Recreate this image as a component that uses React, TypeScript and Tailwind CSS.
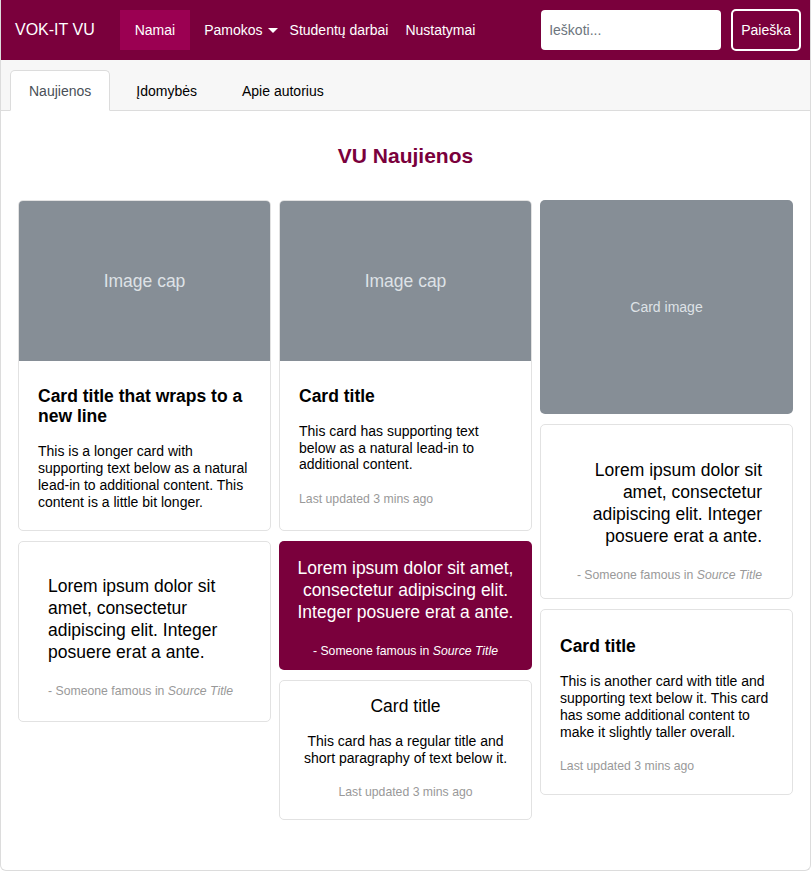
import { useState } from "react";

const font = { fontFamily: '"Liberation Sans", Arial, sans-serif' };

function ImageCap({ label }: { label: string }) {
  return (
    <div className="flex h-[160px] items-center justify-center rounded-t-[4px] bg-[#868e96] text-[17.5px] text-[#dee2e6]">
      {label}
    </div>
  );
}

function Quote({ align, className }: { align: "left" | "right"; className?: string }) {
  return (
    <div className={`rounded-[5px] border border-[#e2e2e2] bg-white ${className ?? ""}`}>
      <p className={`text-[17.5px] leading-[22px] text-black ${align === "right" ? "text-right" : ""}`}>
        Lorem ipsum dolor sit amet, consectetur adipiscing elit. Integer posuere erat a ante.
      </p>
      <p className={`mt-[21px] text-[12.25px] leading-[14px] text-[#999] ${align === "right" ? "text-right" : ""}`}>
        - Someone famous in <i>Source Title</i>
      </p>
    </div>
  );
}

export default function App() {
  const [tab, setTab] = useState("Naujienos");
  const tabs = ["Naujienos", "Įdomybės", "Apie autorius"];

  return (
    <div style={font} className="min-h-screen rounded-b-[6px] border border-t-0 border-[#dcdcdc] bg-white">
      {/* Navbar */}
      <nav className="flex h-[60px] items-center bg-[#7a003c] pl-[14px] pr-[9px] text-white">
        <span className="text-[16px]">VOK-IT VU</span>
        <div className="ml-[25px] flex items-center text-[14px]">
          <a className="flex h-[40px] items-center bg-[#9b0052] px-[15px]">Namai</a>
          <a className="ml-[14px] flex items-center gap-[5px]">
            Pamokos
            <span className="mt-[1px] inline-block border-x-[5px] border-t-[5px] border-x-transparent border-t-white" />
          </a>
          <a className="ml-[12px]">Studentų darbai</a>
          <a className="ml-[17px]">Nustatymai</a>
        </div>
        <div className="ml-auto flex items-center gap-[10px]">
          <input
            placeholder="Ieškoti..."
            className="h-[40px] w-[180px] rounded-[4px] bg-white px-[8px] text-[14px] text-black outline-none placeholder:text-[#6c757d]"
          />
          <button className="h-[42px] rounded-[5px] border-2 border-white px-[8px] text-[14px] text-white">
            Paieška
          </button>
        </div>
      </nav>

      {/* Tabs */}
      <div className="flex h-[51px] items-end gap-[7px] border-b border-[#dcdcdc] bg-[#f7f7f7] pl-[9px] text-[14px]">
        {tabs.map((t) => (
          <button
            key={t}
            onClick={() => setTab(t)}
            className={`-mb-px flex h-[41px] items-center rounded-t-[5px] border px-[18px] pt-[2px] ${
              tab === t ? "border-[#dcdcdc] border-b-white bg-white text-[#495057]" : "border-transparent text-black"
            }`}
          >
            {t}
          </button>
        ))}
      </div>

      <h1 className="mt-[33px] text-center text-[21px] font-bold leading-[24px] text-[#7a003c]">VU Naujienos</h1>

      {/* Card columns */}
      <div className="mt-[32px] flex gap-[8px] px-[17px]">
        {/* Column 1 */}
        <div className="flex flex-1 flex-col gap-[10px]">
          <div className="rounded-[5px] border border-[#e2e2e2] bg-white">
            <ImageCap label="Image cap" />
            <div className="px-[19px] pb-[19px] pt-[25px]">
              <h5 className="text-[17.5px] font-bold leading-[20px] text-black">Card title that wraps to a new line</h5>
              <p className="mt-[17px] text-[14px] leading-[17px] text-black">
                This is a longer card with supporting text below as a natural lead-in to additional content. This
                content is a little bit longer.
              </p>
            </div>
          </div>
          <Quote align="left" className="px-[29px] pb-[23px] pt-[33px]" />
        </div>

        {/* Column 2 */}
        <div className="flex flex-1 flex-col gap-[10px]">
          <div className="rounded-[5px] border border-[#e2e2e2] bg-white">
            <ImageCap label="Image cap" />
            <div className="px-[19px] pb-[24px] pt-[25px]">
              <h5 className="text-[17.5px] font-bold leading-[20px] text-black">Card title</h5>
              <p className="mt-[17px] text-[14px] leading-[16.5px] text-black">
                This card has supporting text below as a natural lead-in to additional content.
              </p>
              <p className="mt-[19px] text-[12.25px] leading-[14px] text-[#999]">Last updated 3 mins ago</p>
            </div>
          </div>
          <div className="rounded-[5px] bg-[#7a003c] px-[12px] pb-[12px] pt-[16px] text-center text-white">
            <p className="text-[17.5px] leading-[22px]">
              Lorem ipsum dolor sit amet, consectetur adipiscing elit. Integer posuere erat a ante.
            </p>
            <p className="mt-[21px] text-[12.25px] leading-[14px]">
              - Someone famous in <i>Source Title</i>
            </p>
          </div>
          <div className="rounded-[5px] border border-[#e2e2e2] bg-white px-[20px] pb-[20px] pt-[14px] text-center">
            <h5 className="text-[17.5px] leading-[22px] text-black">Card title</h5>
            <p className="mt-[16px] text-[14px] leading-[17px] text-black">
              This card has a regular title and short paragraphy of text below it.
            </p>
            <p className="mt-[18px] text-[12.25px] leading-[14px] text-[#999]">Last updated 3 mins ago</p>
          </div>
        </div>

        {/* Column 3 */}
        <div className="flex flex-1 flex-col gap-[10px]">
          <div className="flex h-[214px] items-center justify-center rounded-[5px] bg-[#868e96] text-[14px] text-[#dee2e6]">
            Card image
          </div>
          <Quote align="right" className="px-[30px] pb-[16px] pt-[34px]" />
          <div className="rounded-[5px] border border-[#e2e2e2] bg-white px-[19px] pb-[21px] pt-[26px]">
            <h5 className="text-[17.5px] font-bold leading-[20px] text-black">Card title</h5>
            <p className="mt-[17px] text-[14px] leading-[17px] text-black">
              This is another card with title and supporting text below it. This card has some additional content to
              make it slightly taller overall.
            </p>
            <p className="mt-[18px] text-[12.25px] leading-[14px] text-[#999]">Last updated 3 mins ago</p>
          </div>
        </div>
      </div>
    </div>
  );
}
